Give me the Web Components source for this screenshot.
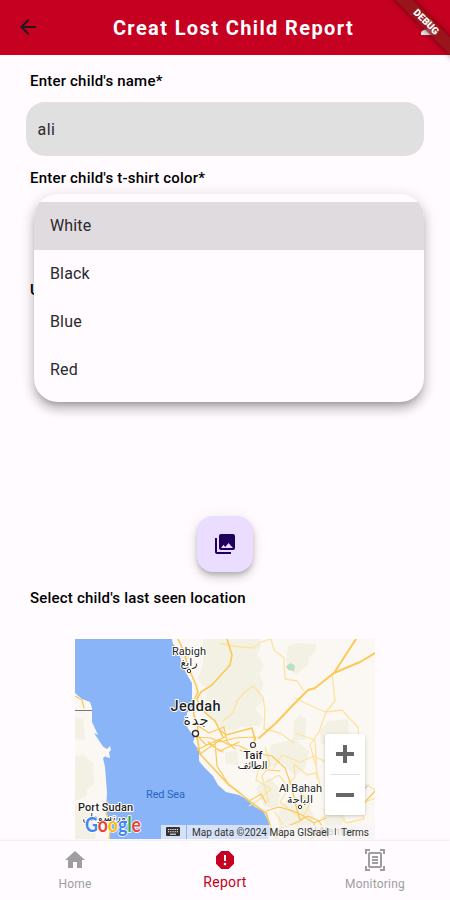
<!DOCTYPE html>
<html lang="en">
<head>
<meta charset="utf-8">
<title>Creat Lost Child Report</title>
<style>
html,body{margin:0;height:100%;overflow:hidden;background:#fffbff;font-family:Roboto,"Noto Sans",sans-serif}
</style>
</head>
<body>
<report-screen></report-screen>
<script>
function define(name, html){
  const t=document.createElement('template');
  t.innerHTML=html;
  customElements.define(name, class extends HTMLElement{
    constructor(){super();this.attachShadow({mode:'open'}).append(t.content.cloneNode(true));}
  });
}

define('app-header', `<style>
:host{display:flex;align-items:center;height:55px;padding:0 9px 2px 16px;background:#c50020;box-sizing:border-box;position:relative;overflow:hidden}
svg{width:24px;height:24px;flex:none}
h1{margin:0;flex:1;text-align:center;color:#fff;font-size:20px;font-weight:700;letter-spacing:1.380px;line-height:24px;white-space:nowrap;padding:3px 0 0 10px}
.back{fill:#1d1b20}.user{fill:#eee}
</style>
<svg class="back" viewBox="0 0 24 24"><path d="M20 11H7.830l5.590-5.590L12 4l-8 8 8 8 1.410-1.410L7.830 13H20z"/></svg>
<h1><slot></slot></h1>
<svg class="user" viewBox="0 0 24 24"><path d="M12 12c2.210 0 4-1.790 4-4s-1.790-4-4-4-4 1.790-4 4 1.790 4 4 4zm0 2c-2.670 0-8 1.340-8 4v2h16v-2c0-2.660-5.330-4-8-4z"/></svg>`);

define('debug-banner', `<style>
:host{display:block;position:absolute;top:0;right:0;width:110px;height:110px;overflow:hidden;pointer-events:none}
div{position:absolute;left:25.700px;top:16.400px;width:120px;height:12px;transform:rotate(45deg);background:rgba(140,26,26,.8);box-shadow:0 0 6px rgba(0,0,0,.5);color:#fff;font-size:9.800px;font-weight:900;line-height:12px;text-align:center}
</style><div><slot></slot></div>`);

define('field-label', `<style>
:host{display:block;font-size:15px;font-weight:500;letter-spacing:.2px;line-height:20px;color:#000;white-space:nowrap;margin-left:30px}
</style><slot></slot>`);

define('text-field', `<style>
:host{display:flex;align-items:center;height:54px;margin:0 26px;border-radius:19px;background:#dfe0df;padding:1px 11.500px 0;box-sizing:border-box;font-size:16px;letter-spacing:.5px;color:#2b292e}
</style><slot></slot>`);

define('menu-item', `<style>
:host{display:flex;align-items:center;height:48px;padding:0 16px 2px;box-sizing:border-box;font-size:16px;letter-spacing:.150px;color:#2b292e}
:host([selected]){background:#e0dbdf}
</style><slot></slot>`);

define('dropdown-menu', `<style>
:host{display:block;position:absolute;left:34px;top:194px;width:390px;height:208px;padding:8px 0;box-sizing:border-box;border-radius:24px;background:#fffbff;overflow:hidden;
box-shadow:0 5px 5px -3px rgba(0,0,0,.2),0 8px 10px 1px rgba(0,0,0,.14),0 3px 14px 2px rgba(0,0,0,.12)}
</style><slot></slot>`);

define('fab-button', `<style>
:host{display:grid;place-items:center;width:56px;height:56px;border-radius:16px;background:#eaddff;margin:0 auto;
box-shadow:0 3px 5px -1px rgba(0,0,0,.2),0 6px 10px rgba(0,0,0,.14),0 1px 18px rgba(0,0,0,.06)}
svg{width:24px;height:24px;fill:#21005d}
</style><svg viewBox="0 0 24 24"><path d="M22 16V4c0-1.100-.9-2-2-2H8c-1.100 0-2 .9-2 2v12c0 1.100.9 2 2 2h12c1.100 0 2-.9 2-2zM8 16l2.500-3.300 1.800 2.200L15.500 11l4.500 5zM2 6v14c0 1.100.9 2 2 2h14v-2H4V6H2z" fill-rule="evenodd"/></svg>`);

define('location-map', `<style>
:host{display:block;width:300px;height:200px;margin:0 auto;position:relative;overflow:hidden}
.map{display:block}
.zoom{position:absolute;right:10px;top:95px;width:40px;height:81px;background:#fff;border-radius:2px;box-shadow:0 1px 4px -1px rgba(0,0,0,.3)}
text{font-family:Roboto,"Noto Sans","DejaVu Sans",sans-serif}
.lb text{fill:#222;stroke:#fff;stroke-width:2px;stroke-linejoin:round;paint-order:stroke}
.lg text{stroke:#fff;stroke-width:1.600px;paint-order:stroke;font-family:Lato,sans-serif}
</style>
<svg class="map" width="300" height="200" viewBox="0 0 300 200">
<rect width="300" height="200" fill="#fbf8f3"/>
<g fill="#f3f0e4">
<path d="M128 0H184L186 8 182 15 189 27 184 35 189 44 185 54 189 62 180 69 188 80 184 87 166 88 160 92 148 91 132 77 128 68 132 52 123 40 128 25z"/>
<path d="M213 7L224 4 241 5 240 13 234 18 233 26 221 35 213 30 211 21z"/>
<path d="M219 82L225 76 231 80 230 101 218 101z M245 92L253 82 273 80 274 97 264 104 246 105z"/>
<path d="M0 117L8 116 18 124 19 145 12 150 12 157 0 162z M0 78L8 80 10 101 0 100z M0 164L12 168 21 190 20 200H0z"/>
<path d="M196 106L220 100 234 112 230 130 220 137 207 124 190 130z M181 149L194 138 206 151 202 170 190 168z M205 166L229 154 239 178 230 200 210 200 203 184z M248 170L263 162 271 180 260 193 249 190z M104 8L116 9 114 20 106 20z M150 114L162 111 164 127 150 124z"/>
</g>
<path fill="#8ab4f8" d="M0 0V54L7 60 15 63 17 69 17 83 23 96 19 94 27 106 33 115 28 119 30 128 32 154 31 171 34 183 35 200H193L196 192 193 181 188 172 180 168 171 160 164 156 151 153 143 146 138 137 129 128 124 122 124 111 118 103 120 98 114 91 110 84 112 74 117 68 117 44 111 34 107 25 103 10 98 5 97 0z"/>
<path fill="#fbf8f3" d="M27 107l5 3 3-3 1 4-2 2 1 6-4-1-4-6z"/>
<path fill="#b9e0c6" d="M211 27l5-3 4 3-1 5-6-1z"/>
<path fill="#aacbf9" d="M295 145l-8 8 4-6z"/>
<g fill="none" stroke="#fde3a0" stroke-width="1.300" stroke-linejoin="round">
<path d="M145 4L156 7 178 9 186 3 196 0M196 0L199 11 209 19 210 40 222 42 229 52M220 59L243 70 251 73 267 71 276 81 283 88 284 100M257 34L260 62 251 73 244 93 235 106 241 127M148 82L158 74 162 62 169 54 178 47 188 58 190 72 189 90 205 94 219 104M220 94L240 101 242 140M198 130L207 116 225 123 239 117 257 126 280 139 300 151"/>
<path d="M176 118L184 128 181 141 196 150 184 161 174 167M192 143L204 136 214 149 205 163 224 178M208 149L220 138 219 125 232 136 242 134 247 154M190 108L195 126 187 137 194 164M224 152L235 165 226 182M200 173L207 184 202 200M247 179L262 171 271 184 289 180 286 165 300 159"/>
</g>
<g fill="none" stroke="#fbc957" stroke-linejoin="round" stroke-linecap="round">
<path stroke-width="2" d="M184 99L201 84 219 65 233 51 240 49 259 34 281 0M259 34L285 23 300 14"/>
<path stroke-width="1.600" d="M145 91L151 96 177 89 180 101M152 0L157 16 155 26 145 37 137 46 126 53 122 60 127 71 140 82 148 98"/>
<path stroke-width="1.600" d="M103 0L109 13 113 28 121 46 123 53 118 63 119 77 123 86 122 98 125 115 139 130 153 145 166 155 177 164 191 174 198 194 201 200"/>
<path stroke-width="1.200" d="M122 98L136 99 145 103 160 99 181 98 177 107M125 115L145 101 152 105 165 107 178 114 197 117 210 129 217 149 221 167 225 181 233 177 244 182 254 200M140 103L142 127 154 146M119 84L134 94 149 88 152 103 160 110M133 103L145 112 164 103M122 111L134 105 148 113M120 94L131 106 150 98M165 111L179 117M174 162L186 155 191 164M191 172L204 168 218 172 227 176 239 184 251 179M201 190L213 187 225 182M282 175L291 162 300 152M0 57L7 61 9 69M33 162L31 174 36 188 34 200M239 184L242 196 235 200M176 126L184 130 205 132"/>
</g>
<path d="M0 71.500h17" stroke="#777"/>
<g class="lb" text-anchor="middle">
<text x="114" y="16" font-size="11" textLength="34">Rabigh</text><text x="114" y="27" font-size="11" textLength="17">رابغ</text>
<text x="120.500" y="72" font-size="14.500" font-weight="500" textLength="50">Jeddah</text><text x="121" y="86" font-size="14" textLength="25">جدة</text>
<text x="178" y="120" font-size="11" font-weight="500" textLength="19">Taif</text><text x="177.500" y="130" font-size="11" textLength="30">الطائف</text>
<text x="225.500" y="153" font-size="11" textLength="43">Al Bahah</text><text x="225" y="164" font-size="11" textLength="26">الباحة</text>
<text x="30.500" y="172" font-size="11" font-weight="500" textLength="55">Port Sudan</text><text x="31" y="182" font-size="10" textLength="47">بورتسودان</text>
</g>
<text x="71" y="159" font-size="11" fill="#2965c4" textLength="39">Red Sea</text>
<g fill="#fff" stroke="#333"><circle cx="114" cy="32" r="1.700"/><circle cx="120.500" cy="94.500" r="3" stroke-width="1.400"/><circle cx="178" cy="106" r="2.500" stroke-width="1.200"/><circle cx="225" cy="168" r="1.700"/></g>
<text x="256" y="196" text-anchor="middle" font-size="11" fill="#888" textLength="48">Al Namas</text>
<g class="lg"><text x="10" y="192.500" font-size="20.500" textLength="56" lengthAdjust="spacingAndGlyphs" font-weight="700"><tspan fill="#4285f4">G</tspan><tspan fill="#ea4335">o</tspan><tspan fill="#fbbc04">o</tspan><tspan fill="#4285f4">g</tspan><tspan fill="#34a853">l</tspan><tspan fill="#ea4335">e</tspan></text></g>
<path fill="#f5f5f5" fill-opacity=".7" d="M86 186h25v14H86zM112 186h188v14H112z"/>
<rect x="91" y="188" width="14" height="9" rx="1" fill="#333"/>
<path d="M93 190.500h10M93 192.800h10" stroke="#fff" stroke-width="1.100" stroke-dasharray="1.200 1"/><path d="M95 195.200h6" stroke="#fff"/>
<g font-size="10" fill="#333"><text x="117" y="196.500" textLength="137">Map data ©2024 Mapa GISrael</text><text x="266" y="196.500" textLength="28">Terms</text></g>
<path d="M260.500 189v7" stroke="#777"/>
</svg>
<svg class="zoom" viewBox="0 0 40 81"><path fill="#666" d="M18 11h4v7h7v4h-7v7h-4v-7h-7v-4h7zM11 59h18v4H11z"/><path fill="#e2e2e2" d="M5 40h30v1H5z"/></svg>`);

define('nav-item', `<style>
:host{flex:1;display:flex;flex-direction:column;align-items:center;color:#9e9e9e;font-size:12px;letter-spacing:.2px;line-height:16px;padding-top:7px}
:host([active]){color:#c50020;font-size:14px;letter-spacing:.3px}
span{margin-top:4px}
:host([active]) span{margin-top:2px}
::slotted(svg){width:24px;height:24px;fill:currentColor}
</style><slot name="icon"></slot><span><slot></slot></span>`);

define('bottom-nav', `<style>
:host{display:flex;height:59px;background:#fffbff;box-shadow:0 -1px 2px rgba(0,0,0,.07);position:relative}
</style><slot></slot>`);

define('report-screen', `<style>
:host{display:flex;flex-direction:column;width:450px;height:900px;position:relative;overflow:hidden}
main{flex:1;min-height:0;display:flex;flex-direction:column}
.name{margin-top:16px}.field{margin-top:11px}.color{margin-top:12px}.upload{margin-top:92px}
fab-button{margin-top:216px}.loc{margin-top:16px}location-map{margin-top:31px;flex:none}
</style>
<app-header>Creat Lost Child Report</app-header>
<main>
<field-label class="name">Enter child's name*</field-label>
<text-field class="field">ali</text-field>
<field-label class="color">Enter child's t-shirt color*</field-label>
<field-label class="upload">U</field-label>
<fab-button></fab-button>
<field-label class="loc">Select child's last seen location</field-label>
<location-map></location-map>
</main>
<bottom-nav>
<nav-item><svg slot="icon" viewBox="0 0 24 24"><path d="M10 20v-6h4v6h5v-8h3L12 3 2 12h3v8z"/></svg>Home</nav-item>
<nav-item active><svg slot="icon" viewBox="0 0 24 24"><path d="M15.730 3H8.270L3 8.270v7.460L8.270 21h7.460L21 15.730V8.270L15.730 3zM12 17.300c-.72 0-1.300-.58-1.300-1.300s.58-1.300 1.300-1.300 1.300.58 1.300 1.300-.58 1.300-1.300 1.300zm1-4.300h-2V7h2v6z"/></svg>Report</nav-item>
<nav-item><svg slot="icon" viewBox="0 0 24 24"><path fill-rule="evenodd" d="M7 3H4v3H2V1h5v2zm15 3V1h-5v2h3v3h2zM7 21H4v-3H2v5h5v-2zm13-3v3h-3v2h5v-5h-2zM19 18c0 1.100-.9 2-2 2H7c-1.100 0-2-.9-2-2V6c0-1.100.9-2 2-2h10c1.100 0 2 .9 2 2v12zM17 6H7v12h10zM15 8H9v2h6zM15 11H9v2h6zM15 14H9v2h6z"/></svg>Monitoring</nav-item>
</bottom-nav>
<dropdown-menu><menu-item selected>White</menu-item><menu-item>Black</menu-item><menu-item>Blue</menu-item><menu-item>Red</menu-item></dropdown-menu>
<debug-banner>DEBUG</debug-banner>`);
</script>
</body>
</html>
